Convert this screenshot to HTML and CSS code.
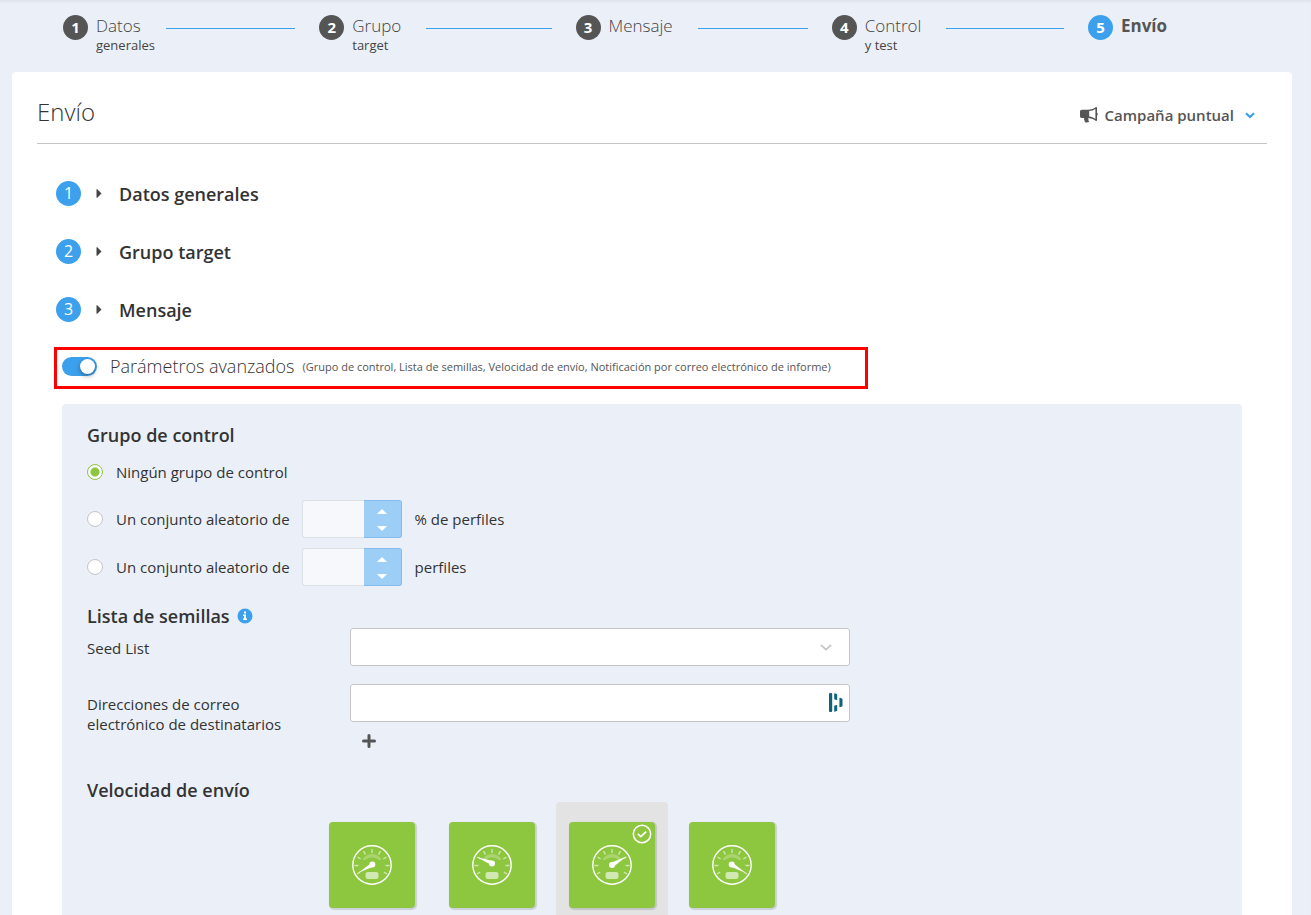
FILE: index.html
```html
<!DOCTYPE html>
<html lang="es">
<head>
<meta charset="utf-8">
<title>Envío</title>
<link rel="stylesheet" href="styles.css">
</head>
<body>
<svg class="sprite" aria-hidden="true">
  <symbol id="dial" viewBox="0 0 40 40">
    <circle cx="20" cy="20" r="19.2" fill="none" stroke="#fff" stroke-width="1.4"/>
    <path d="M10.500 14.500a11 11 0 0 1 19 0l-1.500 1q-8-6-16 0z" fill="#fff" opacity=".25"/>
    <g stroke="#fff" stroke-width="1.300" opacity=".6">
      <path d="M2.500 20.500h4M37.500 20.500h-4M20 4v4M11.500 6l2 3.600M28.500 6l-2 3.600M5.500 12l3.200 2M34.500 12l-3.200 2M5 29l3.200-2M35 29l-3.200-2"/>
    </g>
    <rect x="13.500" y="27" width="13" height="7" rx="2.500" fill="#fff" opacity=".6"/>
  </symbol>
  <symbol id="arrow-right" viewBox="0 0 6 9"><path d="M.5.2h.8L5.500 4.500 1.300 8.800H.5z" fill="currentColor"/></symbol>
</svg>

<nav class="steps" aria-label="Pasos">
  <a class="step" href="#datos"><span class="step-row"><span class="badge">1</span><span class="step-title">Datos</span><span class="step-line"></span></span><span class="step-sub">generales</span></a>
  <a class="step" href="#grupo"><span class="step-row"><span class="badge">2</span><span class="step-title">Grupo</span><span class="step-line"></span></span><span class="step-sub">target</span></a>
  <a class="step" href="#mensaje"><span class="step-row"><span class="badge">3</span><span class="step-title">Mensaje</span><span class="step-line"></span></span></a>
  <a class="step" href="#control"><span class="step-row"><span class="badge">4</span><span class="step-title">Control</span><span class="step-line"></span></span><span class="step-sub">y test</span></a>
  <a class="step current" href="#envio" aria-current="step"><span class="step-row"><span class="badge">5</span><span class="step-title">Envío</span></span></a>
</nav>

<main class="card">
  <header class="card-head">
    <h1>Envío</h1>
    <button class="campaign" type="button">
      <svg width="18" height="16" viewBox="0 0 18 16"><path fill-rule="evenodd" d="M1.800 2.700h6C11 2.600 14 1.500 15.600.2c.8-.4 1.400 0 1.400.6v5c1 .4 1 2.400 0 2.800v4.600c0 .8-.8 1-1.400.6C14 12.500 11.500 11.400 8.600 11c-.6.6-.5 1.200.1 1.900-.5.6-.2 1.200.5 1.700-.8 1-2.800 1.100-4.200.6-.4-1.600-1.200-2.700-.9-4.300H1.800C.8 10.900 0 10.200 0 9.200V4.500c0-1 .8-1.800 1.800-1.800zM9.200 4v5.600c2.300.3 4.300 1.100 6.200 2.300V1.900C13.500 3.100 11.500 3.800 9.200 4z" fill="#555"/></svg>
      <span>Campaña puntual</span>
      <svg width="10" height="7" viewBox="0 0 10 7"><path d="M1 1.200l4 3.800 4-3.800" fill="none" stroke="#3ca0ec" stroke-width="2.200"/></svg>
    </button>
  </header>

  <div class="sections">
    <button class="section" type="button" aria-expanded="false"><span class="badge">1</span><svg class="caret" width="6" height="9"><use href="#arrow-right"/></svg><span>Datos generales</span></button>
    <button class="section" type="button" aria-expanded="false"><span class="badge">2</span><svg class="caret" width="6" height="9"><use href="#arrow-right"/></svg><span>Grupo target</span></button>
    <button class="section" type="button" aria-expanded="false"><span class="badge">3</span><svg class="caret" width="6" height="9"><use href="#arrow-right"/></svg><span>Mensaje</span></button>
  </div>

  <div class="advanced-toggle">
    <input class="switch" type="checkbox" role="switch" id="advanced" checked>
    <label for="advanced">Parámetros avanzados</label>
    <small>(Grupo de control, Lista de semillas, Velocidad de envío, Notificación por correo electrónico de informe)</small>
  </div>

  <form class="panel">
    <h2>Grupo de control</h2>
    <div class="options">
      <div class="option"><input type="radio" name="control" id="none" checked><label for="none">Ningún grupo de control</label></div>
      <div class="option tall">
        <input type="radio" name="control" id="percent"><label for="percent">Un conjunto aleatorio de</label>
        <span class="stepper">
          <input type="number" aria-label="Porcentaje de perfiles">
          <span class="stepper-buttons">
            <button type="button" aria-label="Aumentar"><svg width="10" height="5" viewBox="0 0 10 5"><path d="M0 5l5-5 5 5z" fill="#fff"/></svg></button>
            <button type="button" aria-label="Disminuir"><svg width="10" height="5" viewBox="0 0 10 5"><path d="M0 0l5 5 5-5z" fill="#fff"/></svg></button>
          </span>
        </span>
        <span>% de perfiles</span>
      </div>
      <div class="option tall">
        <input type="radio" name="control" id="count"><label for="count">Un conjunto aleatorio de</label>
        <span class="stepper">
          <input type="number" aria-label="Número de perfiles">
          <span class="stepper-buttons">
            <button type="button" aria-label="Aumentar"><svg width="10" height="5" viewBox="0 0 10 5"><path d="M0 5l5-5 5 5z" fill="#fff"/></svg></button>
            <button type="button" aria-label="Disminuir"><svg width="10" height="5" viewBox="0 0 10 5"><path d="M0 0l5 5 5-5z" fill="#fff"/></svg></button>
          </span>
        </span>
        <span>perfiles</span>
      </div>
    </div>

    <h2 class="seed-title">Lista de semillas
      <svg width="16" height="16" viewBox="0 0 16 16"><circle cx="8" cy="8" r="7.500" fill="#3ca0ec"/><path d="M7 3.500h2v2H7zM6 6.500h3v4h1V12H6v-1.500h1V8H6z" fill="#fff"/></svg>
    </h2>
    <div class="fields">
      <label class="seed-label" for="seed">Seed List</label>
      <div class="control">
        <select id="seed"><option></option></select>
        <svg class="chevron" width="12" height="7" viewBox="0 0 12 7"><path d="M.8.8L6 5.600 11.200.8" fill="none" stroke="#c4c4c4" stroke-width="1.600"/></svg>
      </div>
      <label class="mail-label" for="mail">Direcciones de correo electrónico de destinatarios</label>
      <div class="mail">
        <div class="control">
          <input type="text" id="mail">
          <svg class="vault" width="14" height="19" viewBox="0 0 14 19"><g fill="#0e6579"><rect x="0" y="0" width="3.200" height="19" rx="1"/><path d="M5.200.8q0-.8.700-.6l1.700.7q.6.200.6.800v4.800q0 .6-.6.500l-1.800-.5q-.6-.200-.6-.8zM5.200 13.200q0-.5.600-.7l1.800-.6q.6-.1.600.5v4.800q0 .6-.6.800l-1.700.7q-.7.200-.7-.6zM10.400 5.200q0-.7.700-.5l1.800.7q.6.200.6.800v6.600q0 .6-.6.800l-1.800.7q-.7.200-.7-.5z"/></g></svg>
        </div>
        <button class="add" type="button" aria-label="Añadir dirección"><svg width="14" height="14" viewBox="0 0 14 14"><path d="M7 1.500v11M1.500 7h11" stroke="#555" stroke-width="3" stroke-linecap="round"/></svg></button>
      </div>
    </div>

    <h2 class="speed-title">Velocidad de envío</h2>
    <div class="speeds">
      <label class="speed"><input type="radio" name="speed" aria-label="Lenta"><span class="tile"><svg width="40" height="40" viewBox="0 0 40 40"><use href="#dial"/><path d="M6 28L19 18.200l2.500 3.300z" fill="#fff"/><circle cx="20.300" cy="19.500" r="3" fill="#fff"/></svg></span></label>
      <label class="speed"><input type="radio" name="speed" aria-label="Moderada"><span class="tile"><svg width="40" height="40" viewBox="0 0 40 40"><use href="#dial"/><path d="M4.500 12L21 16l-1.500 4z" fill="#fff"/><circle cx="20" cy="18.500" r="3" fill="#fff"/></svg></span></label>
      <label class="speed"><input type="radio" name="speed" aria-label="Rápida" checked><span class="tile"><svg width="40" height="40" viewBox="0 0 40 40"><use href="#dial"/><path d="M33.500 12L19 18l2.500 3.500z" fill="#fff" stroke="#fff" stroke-width=".4"/><circle cx="20" cy="20" r="3" fill="#fff"/></svg><svg class="check" width="20" height="20" viewBox="0 0 20 20"><circle cx="10" cy="10" r="8.700" fill="none" stroke="#fff" stroke-width="1.500"/><path d="M5.800 9.800l3 2.800 5.400-5" fill="none" stroke="#fff" stroke-width="1.700"/></svg></span></label>
      <label class="speed"><input type="radio" name="speed" aria-label="Máxima"><span class="tile"><svg width="40" height="40" viewBox="0 0 40 40"><use href="#dial"/><path d="M33.800 28L18.500 21.500l2.500-3.500z" fill="#fff"/><circle cx="19.700" cy="19.500" r="3" fill="#fff"/></svg></span></label>
    </div>
  </form>
</main>
</body>
</html>
```
FILE: styles.css
```css
* { box-sizing: border-box; }

body {
  margin: 0;
  min-height: 100vh;
  display: flex;
  flex-direction: column;
  background: #ebf0f8;
  box-shadow: inset 0 3px 3px -1px #dfe3eb;
  color: #333;
  font-family: "Open Sans", "Noto Sans", sans-serif;
  font-size: 15px;
  font-weight: 400;
  line-height: 20px;
}

button {
  padding: 0;
  border: 0;
  background: none;
  color: inherit;
  font: inherit;
  cursor: pointer;
}

.sprite { position: absolute; width: 0; height: 0; }

.badge {
  flex: none;
  width: 25px;
  height: 25px;
  border-radius: 50%;
  background: #3ca0ec;
  color: #fff;
  font-size: 16px;
  line-height: 24px;
  text-align: center;
}

.steps {
  display: grid;
  grid-template-columns: repeat(4, 1fr) 204px;
  height: 72px;
  padding: 15px 19px 0 63px;
}

.step { color: #444; text-decoration: none; }
.step-row { display: flex; align-items: center; height: 25px; }
.step .badge { background: #555; font-size: 15px; font-weight: 700; line-height: 25px; }
.step-title { margin-left: 8px; padding-bottom: 3px; font-size: 17px; font-weight: 300; }
.step-line { flex: 1; height: 1px; margin: 2px 24px 0 25px; background: #3ca0ec; }
.step-sub { display: block; margin-left: 33px; font-size: 13px; line-height: 10px; }
.step.current .badge { background: #3ca0ec; }
.step.current .step-title { color: #555; font-weight: 700; }

.card {
  flex: 1;
  display: flex;
  flex-direction: column;
  margin: 0 19px 0 12px;
  padding: 0 25px;
  border-radius: 4px 4px 0 0;
  background: #fff;
}

.card-head {
  display: flex;
  justify-content: space-between;
  height: 72px;
  padding-top: 24px;
  border-bottom: 1px solid #c6c6c6;
}

h1 { margin: 0; font-size: 24px; font-weight: 300; line-height: 32px; }

.campaign {
  display: flex;
  align-items: center;
  gap: 7px;
  height: 38px;
  padding-right: 12px;
  color: #555;
  font-weight: 600;
}
.campaign span { margin-right: 4px; }

.sections {
  display: flex;
  flex-direction: column;
  gap: 33px;
  padding: 37px 19px 25px;
}
.section {
  display: flex;
  align-items: center;
  font-size: 18px;
  font-weight: 600;
}
.section .badge { font-weight: 400; }
.caret { margin: 0 17px 0 15px; color: #444; }

.advanced-toggle {
  align-self: flex-start;
  display: flex;
  align-items: center;
  height: 42px;
  margin: 0 0 15px 17px;
  padding: 0 34px 4px 5px;
  border: 3px solid #f00;
}
.advanced-toggle label { margin: 0 8px 0 13px; font-size: 18px; font-weight: 300; }
.advanced-toggle small { padding-top: 2px; color: #555; font-size: 11px; }

.switch {
  appearance: none;
  display: flex;
  justify-content: flex-end;
  align-items: center;
  width: 35px;
  height: 19px;
  margin: 0;
  padding: 2px;
  border-radius: 10px;
  background: #3ca0ec;
}
.switch::before {
  content: "";
  width: 15px;
  height: 15px;
  border-radius: 50%;
  background: #fff;
  box-shadow: 0 2px 5px #00000059;
}
.switch:not(:checked) { justify-content: flex-start; background: #bbb; }

.panel {
  flex: 1;
  display: flex;
  flex-direction: column;
  margin: 0 25px;
  padding: 19px 25px 0;
  border-radius: 4px 4px 0 0;
  background: #ebf0f8;
}

h2 { margin: 0; font-size: 18px; font-weight: 600; line-height: 24px; }

.options { display: flex; flex-direction: column; gap: 10px; padding: 15px 0 18px; }
.option { display: flex; align-items: center; height: 20px; }
.option.tall { height: 38px; }
.option:first-child { margin-bottom: 8px; }
.option label { margin: 0 12px 0 13px; }

.option input[type="radio"] {
  appearance: none;
  width: 16px;
  height: 16px;
  margin: 0;
  border: 1px solid #c6c6c6;
  border-radius: 50%;
  background: #fff;
}
.option input[type="radio"]:checked {
  border-color: #8dc63f;
  background: radial-gradient(circle, #8dc63f 4px, #fff 5px);
}

.stepper {
  display: flex;
  width: 100px;
  height: 38px;
  margin-right: 13px;
}
.stepper input {
  appearance: textfield;
  flex: 1;
  min-width: 0;
  border: 1px solid #dce1e8;
  border-right: 0;
  border-radius: 3px 0 0 3px;
  background: #f6f8fc;
}
.stepper-buttons {
  display: flex;
  flex-direction: column;
  justify-content: center;
  width: 38px;
  border: 1px solid #84bbe9;
  border-left: 0;
  border-radius: 0 3px 3px 0;
  background: #9dcff6;
}
.stepper-buttons button { height: 17px; line-height: 0; }

.seed-title { display: flex; align-items: center; gap: 7px; }

.fields {
  display: grid;
  grid-template-columns: 263px minmax(0, 500px);
  row-gap: 18px;
}
.seed-label, .mail-label { width: 210px; padding-top: 10px; }

.control { position: relative; height: 38px; }
.control select, .control input {
  appearance: none;
  display: block;
  width: 100%;
  height: 38px;
  padding: 0 30px 0 12px;
  border: 1px solid #c6c6c6;
  border-radius: 3px;
  background: #fff;
  color: inherit;
  font: inherit;
}
.chevron { position: absolute; top: 16px; right: 18px; pointer-events: none; }
.vault { position: absolute; top: 9px; right: 7px; }
.add { display: block; height: 14px; margin: 12px 0 0 12px; line-height: 0; }

.speed-title { margin-top: 30px; }
.speeds { flex: 1; display: flex; gap: 8px; padding-left: 229px; }
.speed {
  width: 112px;
  padding: 20px 13px 7px;
  border-radius: 4px 4px 0 0;
}
.speed:has(:checked) { background: #e3e3e3; }
.speed input { position: absolute; opacity: 0; }
.tile {
  position: relative;
  display: flex;
  align-items: center;
  justify-content: center;
  height: 86px;
  border-radius: 4px;
  background: #8dc63f;
  box-shadow: 1px 1px 1px 1px #0002;
}
.check { position: absolute; top: 2px; right: 3px; }
```
